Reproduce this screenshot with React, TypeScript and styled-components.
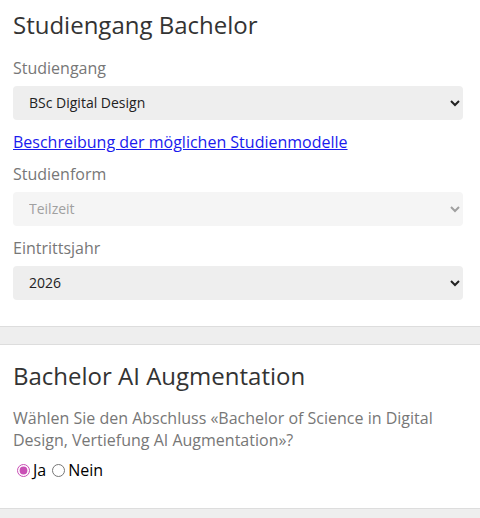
import * as React from "react";
import styled, { createGlobalStyle } from "styled-components";

const GlobalStyle = createGlobalStyle`
  html, body {
    margin: 0;
    padding: 0;
    background: #eeeeee;
    font-family: "Open Sans", "Noto Sans", sans-serif;
  }
`;

const Page = styled.div`
  width: 480px;
  display: flex;
  flex-direction: column;
  gap: 17px;
`;

const Panel = styled.section<{ $first?: boolean }>`
  background: #ffffff;
  border-bottom: 1px solid #dddddd;
  border-top: ${(p) => (p.$first ? "none" : "1px solid #dddddd")};
  padding: ${(p) => (p.$first ? "8px 17px 16px 13px" : "14px 17px 26px 13px")};
`;

const Heading = styled.h2<{ $space: number }>`
  margin: 0 0 ${(p) => p.$space}px;
  font-size: 24px;
  font-weight: 400;
  color: #333333;
  line-height: 1.4;
`;

const Group = styled.div`
  margin-bottom: 10px;
`;

const Label = styled.label`
  display: block;
  font-size: 16px;
  line-height: 24px;
  color: #777777;
  margin-bottom: 6px;
`;

const SelectBox = styled.select`
  display: block;
  width: 450px;
  height: 34px;
  padding: 0 12px;
  border: none;
  border-radius: 4px;
  background: #eeeeee;
  color: #222222;
  font-family: "Open Sans", sans-serif;
  font-size: 14px;
  &:disabled {
    background: #f5f5f5;
    color: #a0a0a0;
    opacity: 1;
  }
`;

const DocLink = styled.a`
  display: block;
  font-size: 16px;
  line-height: 24px;
  color: #1a1aee;
  text-decoration: underline;
  margin-bottom: 8px;
`;

const Question = styled.p`
  margin: 0;
  font-size: 16px;
  line-height: 22px;
  color: #777777;
`;

const RadioRow = styled.div`
  display: flex;
  align-items: center;
  margin-top: 7px;
  padding-left: 4px;
  font-size: 16px;
  color: #000000;
  line-height: 24px;
`;

const RadioLabel = styled.label`
  display: flex;
  align-items: center;
  gap: 3px;
  margin-right: 6px;
`;

const Radio = styled.input`
  margin: 0;
  width: 13px;
  height: 13px;
  accent-color: #c94fb5;
`;

export default function App() {
  return (
    <Page>
      <GlobalStyle />
      <Panel $first>
        <Heading $space={14}>Studiengang Bachelor</Heading>
        <Group>
          <Label>Studiengang</Label>
          <SelectBox defaultValue="bsc">
            <option value="bsc">BSc Digital Design</option>
          </SelectBox>
        </Group>
        <DocLink href="#">Beschreibung der möglichen Studienmodelle</DocLink>
        <Group>
          <Label>Studienform</Label>
          <SelectBox disabled defaultValue="tz">
            <option value="tz">Teilzeit</option>
          </SelectBox>
        </Group>
        <Group>
          <Label>Eintrittsjahr</Label>
          <SelectBox defaultValue="2026">
            <option value="2026">2026</option>
          </SelectBox>
        </Group>
      </Panel>
      <Panel>
        <Heading $space={15}>Bachelor AI Augmentation</Heading>
        <Question>
          Wählen Sie den Abschluss «Bachelor of Science in Digital Design, Vertiefung AI Augmentation»?
        </Question>
        <RadioRow>
          <RadioLabel>
            <Radio type="radio" name="ai" defaultChecked />
            Ja
          </RadioLabel>
          <RadioLabel>
            <Radio type="radio" name="ai" />
            Nein
          </RadioLabel>
        </RadioRow>
      </Panel>
    </Page>
  );
}
